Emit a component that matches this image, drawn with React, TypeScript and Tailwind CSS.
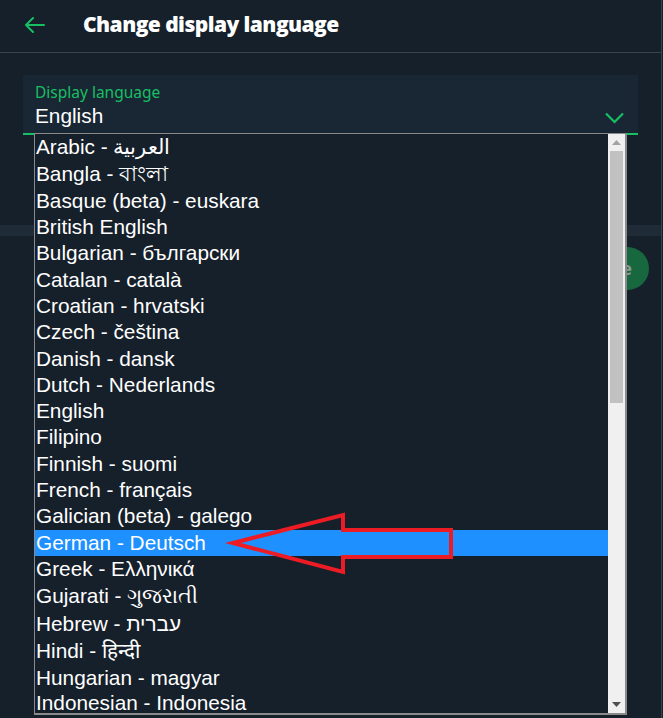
import React from "react";

const rows: { t: string; h: number; pt?: number }[] = [
  { t: "Arabic - العربية", h: 27 },
  { t: "Bangla - বাংলা", h: 27 },
  { t: "Basque (beta) - euskara", h: 26.3 },
  { t: "British English", h: 26.3 },
  { t: "Bulgarian - български", h: 26.3 },
  { t: "Catalan - català", h: 26.3 },
  { t: "Croatian - hrvatski", h: 26.3 },
  { t: "Czech - čeština", h: 26.3 },
  { t: "Danish - dansk", h: 26.3 },
  { t: "Dutch - Nederlands", h: 26.3 },
  { t: "English", h: 26.3 },
  { t: "Filipino", h: 26.3 },
  { t: "Finnish - suomi", h: 26.3 },
  { t: "French - français", h: 26.3 },
  { t: "Galician (beta) - galego", h: 26.3 },
  { t: "German - Deutsch", h: 26.3 },
  { t: "Greek - Ελληνικά", h: 26.3 },
  { t: "Gujarati - ગુજરાતી", h: 28.5 },
  { t: "Hebrew - עברית", h: 26.3 },
  { t: "Hindi - हिन्दी", h: 28.5 },
  { t: "Hungarian - magyar", h: 25.8 },
  { t: "Indonesian - Indonesia", h: 21.4, pt: 3 },
];

export default function App() {
  return (
    <div className="relative w-[663px] h-[718px] overflow-hidden bg-[#15202b] [font-family:'Liberation_Sans',Arial,sans-serif]">
      <div className="w-[662px] h-full border-r border-[#38444d] flex flex-col">
        {/* header */}
        <div className="h-[53px] border-b border-[#38444d] flex items-center shrink-0">
          <svg width="20" height="16" viewBox="0 0 20 16" className="ml-[25px] mt-[-2px]" fill="none" stroke="#17bf63" strokeWidth="2" strokeLinecap="round" strokeLinejoin="round">
            <path d="M1 8h18M8 1 1 8l7 7" />
          </svg>
          <div className="ml-[38px] mt-[-2px] text-white text-[21px] font-extrabold tracking-[-0.55px] [font-family:'Open_Sans',sans-serif]">
            Change display language
          </div>
        </div>
        {/* select */}
        <div className="mx-[23px] mt-[22px] h-[60px] bg-[#192734] border-b-2 border-[#17bf63] flex flex-col pl-[12px] pr-[15px] relative">
          <div className="mt-[7px] text-[15.5px] leading-[20px] text-[#17bf63] [font-family:'Noto_Sans',sans-serif]">Display language</div>
          <div className="mt-[2px] text-[20.8px] leading-[24px] text-white">English</div>
          <svg width="19" height="12" viewBox="0 0 19 12" className="absolute right-[14px] top-[37px]" fill="none" stroke="#17bf63" strokeWidth="2.2">
            <path d="M1 1.5l8.5 8.5L18 1.5" />
          </svg>
        </div>
        <div className="mt-[90px] h-[11px] bg-[#1f2b37]" />
        <div className="mt-[11px] flex justify-end pr-[12px]">
          <div className="h-[43px] px-[17px] rounded-full bg-[#17683f] flex items-center text-[18px] font-bold text-[#8c9a93] [font-family:'Open_Sans',sans-serif]">
            Save
          </div>
        </div>
      </div>

      {/* dropdown list */}
      <div className="absolute left-[34px] top-[133px] w-[593px] h-[582px] border-l border-t border-b-2 border-r-2 border-[#8a8a8a] bg-[#16202b] flex overflow-hidden">
        <div className="flex-1 flex flex-col overflow-hidden">
          {rows.map((r) => (
            <div
              key={r.t}
              style={{ height: r.h, paddingTop: r.pt ?? 0 }}
              className={`shrink-0 flex items-center pl-[1px] text-[20.8px] leading-none whitespace-nowrap ${
                r.t.startsWith("German") ? "bg-[#1e90ff] text-white" : "text-white"
              }`}
            >
              {r.t}
            </div>
          ))}
        </div>
        <div className="w-[17px] h-full bg-[#f0f0f0] flex flex-col items-center shrink-0">
          <div className="h-[17px] w-full flex items-center justify-center">
            <svg width="9" height="5" viewBox="0 0 9 5"><path d="M0 5h9L4.5 0z" fill="#a3a3a3" /></svg>
          </div>
          <div className="w-[13px] h-[252px] bg-[#c1c1c1]" />
          <div className="flex-1" />
          <div className="h-[17px] w-full flex items-center justify-center">
            <svg width="9" height="5" viewBox="0 0 9 5"><path d="M0 0h9L4.5 5z" fill="#505050" /></svg>
          </div>
        </div>
      </div>

      {/* red annotation arrow */}
      <svg className="absolute left-0 top-0 pointer-events-none" width="663" height="718">
        <polygon
          points="233,543 343,515 343,530 451,530 451,557 343,557 343,572"
          fill="none"
          stroke="#ed1c24"
          strokeWidth="4"
          strokeLinejoin="miter"
        />
      </svg>
    </div>
  );
}
